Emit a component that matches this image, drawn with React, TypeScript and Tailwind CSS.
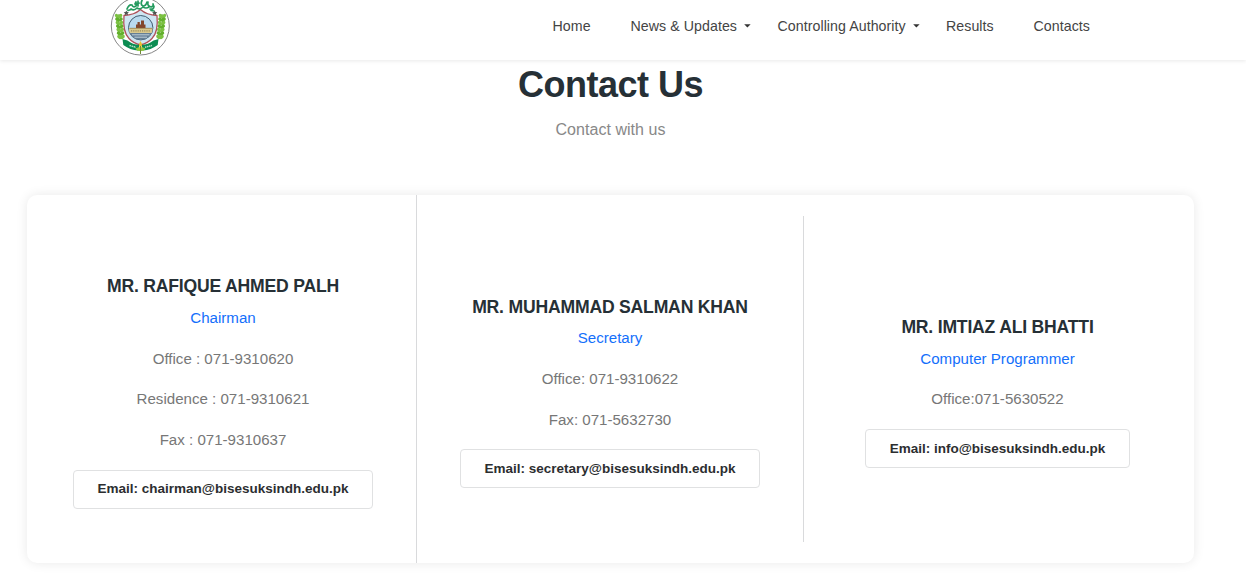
import React from "react";

type Contact = {
  name: string;
  role: string;
  lines: string[];
  email: string;
  cell: string;
  info: string;
  button: string;
};

const contacts: Contact[] = [
  {
    name: "MR. RAFIQUE AHMED PALH",
    role: "Chairman",
    lines: ["Office : 071-9310620", "Residence : 071-9310621", "Fax : 071-9310637"],
    email: "chairman@bisesuksindh.edu.pk",
    cell: "w-[390px] self-stretch border-r pl-[3px] pt-[78px]",
    info: "gap-[16.5px] mt-[17px] mb-[18.5px]",
    button: "pb-[1px]",
  },
  {
    name: "MR. MUHAMMAD SALMAN KHAN",
    role: "Secretary",
    lines: ["Office: 071-9310622", "Fax: 071-5632730"],
    email: "secretary@bisesuksindh.edu.pk",
    cell: "w-[387px] h-[326px] border-r pt-[77.5px]",
    info: "gap-[17px] mt-[17px] mb-[17px]",
    button: "pt-[1px]",
  },
  {
    name: "MR. IMTIAZ ALI BHATTI",
    role: "Computer Programmer",
    lines: ["Office:071-5630522"],
    email: "info@bisesuksindh.edu.pk",
    cell: "w-[390px] h-[286px] pr-[3px] pt-[78px]",
    info: "mt-[16px] mb-[18.5px]",
    button: "pt-[1px]",
  },
];

function Leaves({ flip = false }: { flip?: boolean }) {
  const leaves = [20, 23.5, 27, 30.5, 34, 37.5, 41];
  return (
    <g transform={flip ? "translate(61 0) scale(-1 1)" : undefined}>
      <path d="M9 18 Q7 30 12 43" fill="none" stroke="#5f9d3c" strokeWidth="1" />
      {leaves.map((y, i) => (
        <g key={y} fill={i % 2 ? "#63b02c" : "#7cc242"}>
          <ellipse cx={7 + i * 0.4} cy={y} rx="2.500" ry="1.700" transform={`rotate(40 ${7 + i * 0.4} ${y})`} />
          <ellipse cx={10.2 + i * 0.4} cy={y} rx="2.500" ry="1.700" transform={`rotate(-40 ${10.2 + i * 0.4} ${y})`} />
        </g>
      ))}
    </g>
  );
}

function Crest() {
  return (
    <svg className="block h-[60px] w-[60px]" viewBox="0 0 60 60" aria-hidden="true">
      <circle cx="30.3" cy="30" r="29" fill="#fff" stroke="#777" strokeWidth="0.9" />
      <Leaves />
      <Leaves flip />
      <path d="M30.500 13.500 Q36.500 19 47 19.500 Q48.500 36 42 42.500 Q38 47 30.500 49 Q23 47 19 42.500 Q12.500 36 14 19.500 Q24.500 19 30.500 13.500z" fill="#cfe6f3" stroke="#b0525a" strokeWidth="1.300" />
      <path
        d="M17 13 q2 -5 5 -4 q1 3 4 1 q1 -4 3 -3 M21 13 q3 2 6 -1 q3 2 6 -1 q3 2 6 0 M28 5 v5 M32 4.500 q-2 4 1 5.500 q3 0 4 -4 M38 6 q-1 4 3 5 q3 -1 2 -3 M44 10 q0 4 -4 3 M18 14.500 l3 -1 M41 14.500 l3 .5 M25 8 l1 -2"
        fill="none"
        stroke="#249a5e"
        strokeWidth="1.700"
        strokeLinecap="round"
      />
      <path d="M16.300 14.500 l.8 1.600 1.800.2 -1.300 1.200.4 1.800 -1.700 -.9 -1.700.9.4 -1.800 -1.300 -1.200 1.800 -.2z" fill="#4e5450" />
      <path d="M44.700 14.500 l.8 1.600 1.800.2 -1.300 1.200.4 1.800 -1.700 -.9 -1.700.9.4 -1.800 -1.300 -1.200 1.800 -.2z" fill="#4e5450" />
      <circle cx="30.700" cy="31.700" r="12.200" fill="#b9daee" stroke="#425c71" strokeWidth="1" />
      <path d="M26 33 v-4.500 h1.500 v-2.500 h2.300 v2.500 h1.200 v-4 h3 v4 h1.500 v4.500z" fill="#82482c" />
      <path d="M19 32 h23.400 q.3 3 -.8 5 h-21.800 q-1.100 -2 -.8 -5z" fill="#d9c98e" />
      <path d="M19.500 32.300 h22.500" stroke="#8b7440" strokeWidth="0.7" />
      <path d="M21 34.800 h19.500" stroke="#9b8c58" strokeWidth="1.200" strokeDasharray="1.200 1" />
      <path d="M19.700 37 h22 q-2.500 6.500 -11 6.700 q-8.500 -.2 -11 -6.700z" fill="#657f96" />
      <path d="M22 38.800 h17.500 M24.500 41.200 h12.500" stroke="#c8d8e2" strokeWidth="0.9" />
      <path d="M17.500 44.500 l-5 -1.500 .8 6 q7 5 14.700 5.500 l1.500 -5.500 q-7 -.5 -12 -4.500z" fill="#0b8c52" />
      <path d="M43.500 44.500 l5 -1.500 -.8 6 q-7 5 -14.700 5.500 l-1.500 -5.500 q7 -.5 12 -4.500z" fill="#0b8c52" />
      <path d="M19.500 49.500 l6.500 1.800 M35 51.300 l7 -1.800" stroke="#b9e1ca" strokeWidth="1.400" strokeDasharray="1.500 .6" />
      <path d="M25.500 52.500 q5 -3 10 0 l-1.500 2 q-3.500 1 -7 0z" fill="#8ec63f" />
      <path d="M30.500 45 l1.500 3 -.7 5 h-1.600 l-.7 -5z" fill="#e9c12c" />
      <path d="M30.500 50 v8" stroke="#6f8a35" strokeWidth="1" />
    </svg>
  );
}

function Caret() {
  return (
    <svg className="mb-[1px] ml-[7px] block h-[4px] w-[7px]" viewBox="0 0 7 4" aria-hidden="true">
      <path d="M0.200 0.300 h6.400 L3.400 3.600z" fill="#333" />
    </svg>
  );
}

export default function App() {
  return (
    <div className="h-[574px] overflow-hidden bg-white font-['Liberation_Sans',Arial,sans-serif]">
      <header className="h-[60px] bg-white pl-[110px] shadow-[0_1px_4px_rgba(0,0,0,0.09)]">
        <div className="flex">
          <div className="-mt-[4px] h-[60px] w-[442.5px]">
            <Crest />
          </div>
          <nav className="flex h-[54px] items-center text-[14.2px] tracking-[0.06px] text-[#444]">
            <a className="w-[78px]">Home</a>
            <a className="flex w-[147px] items-center">
              News &amp; Updates
              <Caret />
            </a>
            <a className="flex w-[168.5px] items-center">
              Controlling Authority
              <Caret />
            </a>
            <a className="w-[87.5px]">Results</a>
            <a>Contacts</a>
          </nav>
        </div>
      </header>

      <main>
        <div className="w-[1221px] pt-[3px] text-center">
          <h1 className="text-[36px] leading-[44px] font-bold tracking-[-0.5px] text-[#263036]">Contact Us</h1>
          <p className="mt-[11px] text-[16px] leading-[24px] tracking-[0.04px] text-[#888]">Contact with us</p>
        </div>

        <section className="mt-[53px] ml-[27px] flex h-[368px] w-[1167px] items-center rounded-[10px] bg-white shadow-[0_0_12px_rgba(0,0,0,0.09)]">
          {contacts.map((c) => (
            <article key={c.email} className={`flex shrink-0 flex-col items-center border-[#d9dadc] ${c.cell}`}>
              <h2 className="text-[17.6px] leading-[26px] font-bold tracking-[-0.2px] text-[#263036]">{c.name}</h2>
              <p className="mt-[6.5px] text-[15.1px] leading-[24px] text-[#146ffb]">{c.role}</p>
              <div className={`flex flex-col items-center text-[15.1px] leading-[24px] text-[#777] ${c.info}`}>
                {c.lines.map((line) => (
                  <p key={line}>{line}</p>
                ))}
              </div>
              <a
                className={`flex h-[39px] items-center rounded-[4px] border border-[#e0e1e2] px-[23.5px] text-[13.5px] leading-[20px] font-bold text-[#2c2e30] ${c.button}`}
              >
                Email: {c.email}
              </a>
            </article>
          ))}
        </section>
      </main>
    </div>
  );
}
